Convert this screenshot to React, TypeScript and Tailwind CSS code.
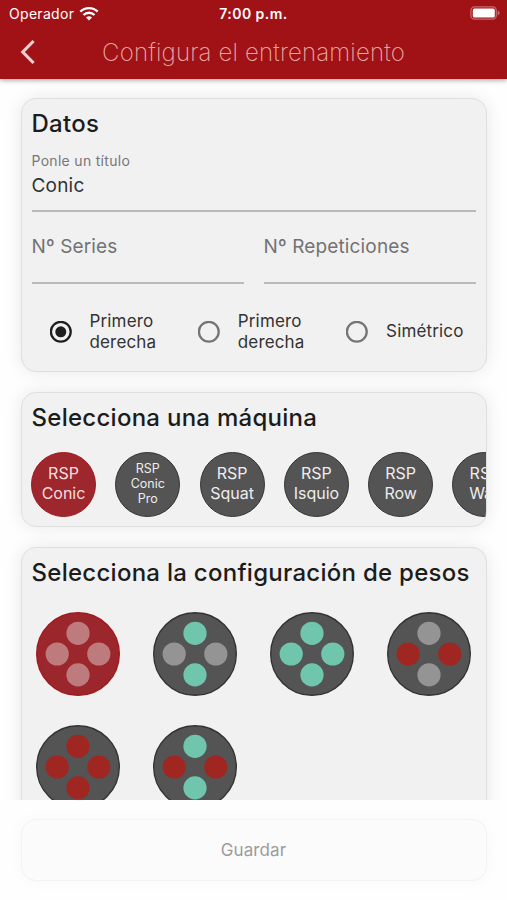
import type { ReactNode } from 'react';

type Weight = 'empty' | 'green' | 'red';

const sides = [
  { label: 'Primero derecha', selected: true },
  { label: 'Primero derecha', selected: false },
  { label: 'Simétrico', selected: false },
];

const machines = [
  { name: ['RSP', 'Conic'], selected: true },
  { name: ['RSP', 'Conic', 'Pro'] },
  { name: ['RSP', 'Squat'] },
  { name: ['RSP', 'Isquio'] },
  { name: ['RSP', 'Row'] },
  { name: ['RSP', 'Wall'] },
];

// top, left, right, bottom
const configs: { weights: Weight[]; selected?: boolean }[] = [
  { weights: ['empty', 'empty', 'empty', 'empty'], selected: true },
  { weights: ['green', 'empty', 'empty', 'green'] },
  { weights: ['green', 'green', 'green', 'green'] },
  { weights: ['empty', 'red', 'red', 'empty'] },
  { weights: ['red', 'red', 'red', 'red'] },
  { weights: ['green', 'red', 'red', 'green'] },
];

const weightColors: Record<Weight, string> = {
  empty: '#949494',
  green: '#70c6ac',
  red: '#a02622',
};

const weightSpots = [
  [42, 21.3],
  [21.2, 42],
  [62.8, 42],
  [42, 62.9],
];

function StatusBar() {
  return (
    <div className="grid h-[27px] grid-cols-3 items-center pr-[6px] pl-[9px] text-[14px] text-white">
      <div className="flex items-center gap-[5px]">
        <span className="tracking-[0.3px]">Operador</span>
        <svg className="-mt-px" width="20" height="15" viewBox="0 0 20 15" fill="none" stroke="#fff" strokeWidth="2.4">
          <path d="M1.3 5.7a12.4 12.4 0 0 1 17.4 0" />
          <path d="M4.5 9a7.8 7.8 0 0 1 11 0" />
          <path d="M10 14.6 7 11.6a4.3 4.3 0 0 1 6 0z" fill="#fff" stroke="none" />
        </svg>
      </div>
      <span className="-ml-[3px] text-center font-semibold tracking-[0.45px]">7:00 p.m.</span>
      <svg className="-mt-px justify-self-end" width="31" height="14" viewBox="0 0 31 14">
        <rect x="0.9" y="0.9" width="25.4" height="12.2" rx="3.6" fill="none" stroke="#c8686b" strokeWidth="1.3" />
        <rect x="2.8" y="2.4" width="22" height="9.2" rx="1.6" fill="#fff" />
        <path d="M27.6 4.6v4.8c1.2-.4 2.1-1.2 2.1-2.4s-.9-2-2.1-2.4z" fill="#c8686b" />
      </svg>
    </div>
  );
}

function Header() {
  return (
    <header className="relative z-10 h-[79px] shrink-0 bg-[#a01216] shadow-[0_1px_5px_rgba(0,0,0,0.4)]">
      <StatusBar />
      <div className="grid h-[50px] grid-cols-[60px_1fr_60px] items-center">
        <svg className="ml-[20px]" width="16" height="26" viewBox="0 0 16 26" fill="none" stroke="#e8cfcf" strokeWidth="3.2">
          <path d="M13.6 2 2.8 13l10.8 11" />
        </svg>
        <h1 className="pt-[2px] text-center text-[24px] font-extralight tracking-[0.18px] whitespace-nowrap text-[#e9a9a2]">
          Configura el entrenamiento
        </h1>
      </div>
    </header>
  );
}

function Card({ title, className, children }: { title: string; className: string; children: ReactNode }) {
  return (
    <section
      className={`shrink-0 overflow-hidden rounded-[15px] border border-[#dfdfdf] bg-[#f1f1f1] pt-[9px] pl-[10px] shadow-[0_0_18px_rgba(0,0,0,0.09)] ${className}`}
    >
      <h2 className="h-8 text-[24px] leading-8 font-[450] tracking-[0.27px] whitespace-nowrap text-[#1c1c1c]">
        {title}
      </h2>
      {children}
    </section>
  );
}

function Radio({ label, selected }: { label: string; selected: boolean }) {
  const color = selected ? '#1f1f1f' : '#757575';
  return (
    <div className="flex w-[148.3px] shrink-0 items-center gap-[18px]">
      <svg className="shrink-0" width="22" height="22" viewBox="0 0 22 22">
        <circle cx="10.8" cy="10.8" r="9.9" fill="none" stroke={color} strokeWidth="2.3" />
        {selected && <circle cx="10.8" cy="10.8" r="5.5" fill={color} />}
      </svg>
      <span className="w-[80px] text-[17px] leading-[20.5px] tracking-[0.15px] text-[#333]">{label}</span>
    </div>
  );
}

function Machine({ name, selected }: { name: string[]; selected?: boolean }) {
  const size = name.length > 2 ? 'text-[12.5px] leading-[15px]' : 'text-[16px] leading-[19.5px]';
  return (
    <div
      className={`flex size-[65px] shrink-0 flex-col items-center justify-center rounded-full border pb-px ${size} ${
        selected ? 'border-[#a01a1f] bg-[#9d272c] text-[#f7dede]' : 'border-[#333] bg-[#545454] text-[#ededed]'
      }`}
    >
      {name.map((line) => (
        <span key={line}>{line}</span>
      ))}
    </div>
  );
}

function WeightConfig({ weights, selected }: { weights: Weight[]; selected?: boolean }) {
  return (
    <svg width="84" height="84" viewBox="0 0 84 84">
      <circle
        cx="42"
        cy="42"
        r="41.3"
        fill={selected ? '#9b262b' : '#545454'}
        stroke={selected ? '#a01a1f' : '#333'}
        strokeWidth="1.4"
      />
      {weights.map((weight, index) => (
        <circle
          key={index}
          cx={weightSpots[index][0]}
          cy={weightSpots[index][1]}
          r="11.6"
          fill={selected ? '#be7b7e' : weightColors[weight]}
        />
      ))}
    </svg>
  );
}

export default function App() {
  return (
    <div className="flex h-[900px] w-[507px] flex-col overflow-hidden bg-[#fefefe] font-['Inter',sans-serif]">
      <Header />

      <main className="flex h-[721px] shrink-0 flex-col gap-[20px] overflow-hidden px-[20.5px] pt-[19px]">
        <Card title="Datos" className="h-[274px]">
          <div className="mr-[10px] h-[72px] border-b-2 border-[#b9b9b9] pt-[12px]">
            <div className="text-[14px] leading-[17px] tracking-[0.3px] text-[#777]">Ponle un título</div>
            <div className="mt-[5px] text-[19px] leading-[24px] tracking-[0.2px] text-[#333]">Conic</div>
          </div>
          <div className="mr-[10px] grid grid-cols-2 gap-[20px] text-[19px] leading-[24px] tracking-[0.15px] text-[#737373]">
            <div className="h-[72px] border-b-2 border-[#b9bbb9] pt-[23px]">Nº Series</div>
            <div className="h-[72px] border-b-2 border-[#b9bbb9] pt-[23px]">Nº Repeticiones</div>
          </div>
          <div className="mt-[27px] flex pl-[18px]">
            {sides.map((side, index) => (
              <Radio key={index} {...side} />
            ))}
          </div>
        </Card>

        <Card title="Selecciona una máquina" className="h-[135px]">
          <div className="mt-[17.5px] -ml-[0.5px] flex gap-[19.3px]">
            {machines.map((machine) => (
              <Machine key={machine.name.join(' ')} {...machine} />
            ))}
          </div>
        </Card>

        <Card title="Selecciona la configuración de pesos" className="h-[330px]">
          <div className="mt-[22.5px] ml-[4.3px] grid grid-cols-[repeat(4,84px)] gap-x-[33.2px] gap-y-[29px]">
            {configs.map((config, index) => (
              <WeightConfig key={index} {...config} />
            ))}
          </div>
        </Card>
      </main>

      <footer className="flex-1 px-[20.5px] pt-[19px]">
        <button className="h-[62px] w-full rounded-[15px] border border-[#f3f3f3] bg-[#fbfbfb] pt-[2px] text-[17px] tracking-[0.1px] text-[#9c9c9c] shadow-[0_0_16px_rgba(0,0,0,0.03)]">
          Guardar
        </button>
      </footer>
    </div>
  );
}
